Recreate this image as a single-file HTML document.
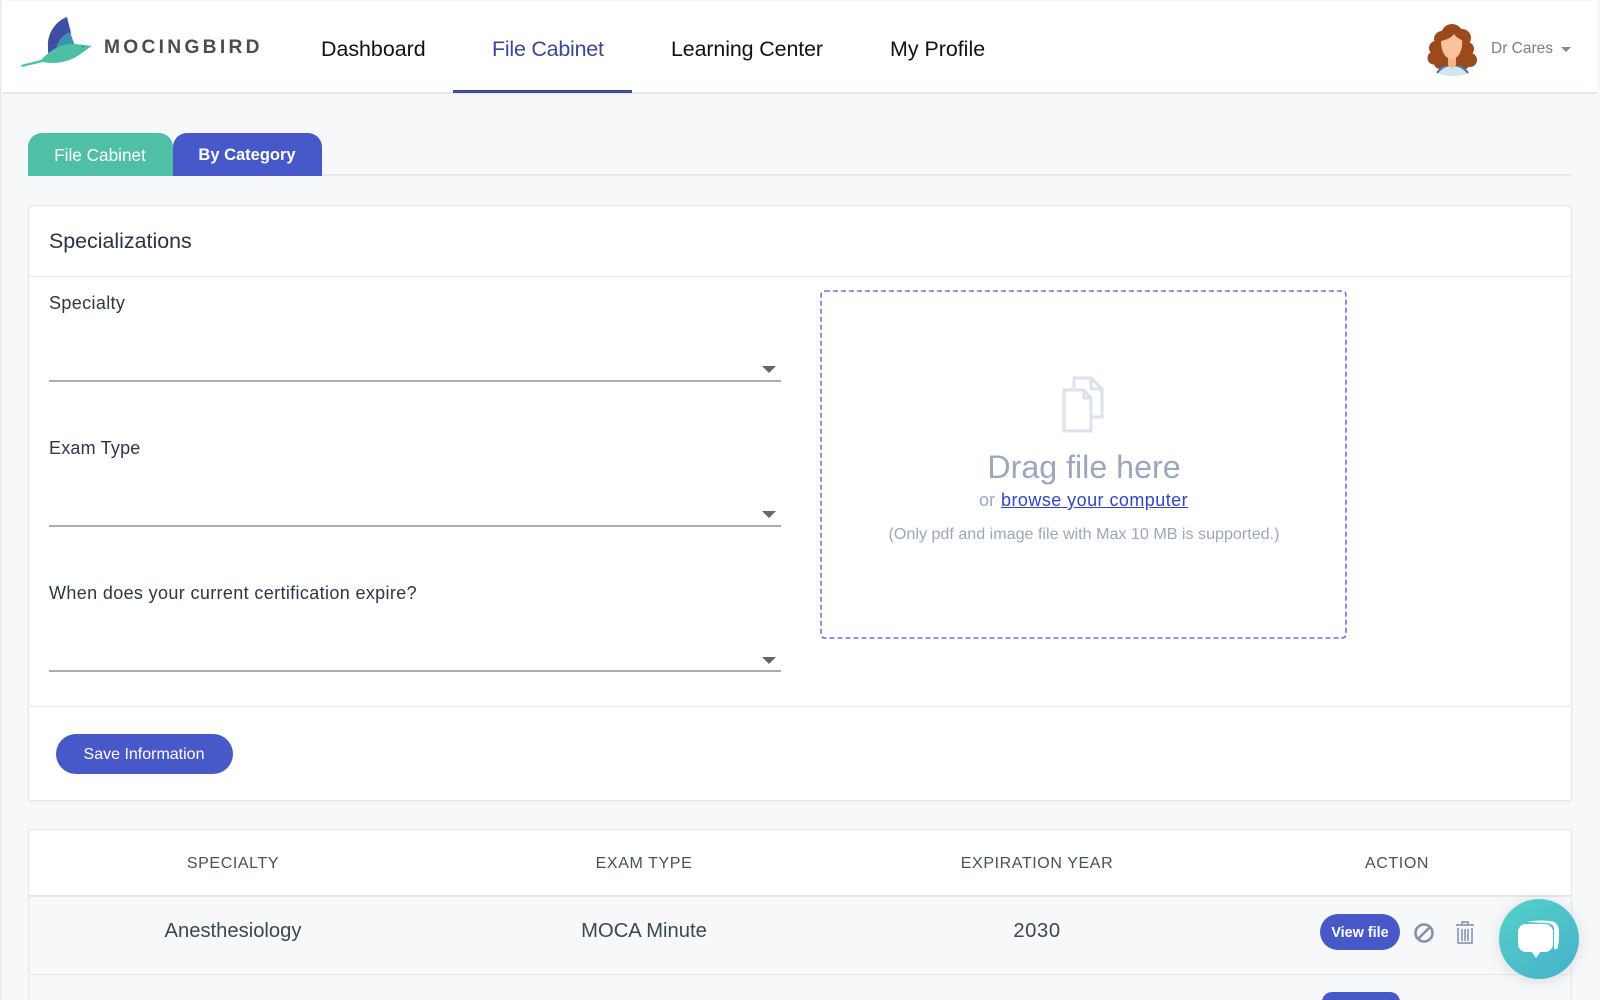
<!DOCTYPE html>
<html><head><meta charset="utf-8"><title>Mocingbird</title>
<style>
html,body{margin:0;padding:0;width:1600px;height:1000px;overflow:hidden}
body{background:#f7f8fa;font-family:"Liberation Sans",sans-serif}
#p{position:relative;width:1600px;height:1000px;overflow:hidden;background:#f7f8fa}
.a,.t{position:absolute}
.t{white-space:nowrap;line-height:1}
.c{transform:translateX(-50%)}
svg{position:absolute;overflow:visible}
.arrow{position:absolute;width:0;height:0;border-left:7px solid transparent;border-right:7px solid transparent;border-top:7px solid #666}
.ln{position:absolute;left:49px;width:732px;height:2px;background:#adadad}
.nav{font-size:21.4px;color:#111;top:39px}
.lab{font-size:18px;color:#2d3748;left:49px;letter-spacing:.36px}
.th{font-size:16px;color:#47505e;top:856px;letter-spacing:.6px}
.td{font-size:20.2px;color:#3d4652;top:921px}
</style></head><body><div id="p">
<header class="a" style="left:2px;top:1px;width:1595px;height:91px;background:#fff;border-bottom:2px solid #e6e8ec"></header>
<div class="a" style="left:0;top:0;width:1px;height:1000px;background:#e6e8ec"></div>
<svg style="left:0;top:0" width="100" height="80" viewBox="0 0 100 80">
<path d="M67 17C56 21 47 33 48 47C48 51 48 54 49 57L56 53L71 33Z" fill="#3f4da3"/>
<path d="M55 53C57 41 62 35 70 32L75 46C67 46 61 49 55 53Z" fill="#3f8fb0"/>
<path d="M21 65L41 60C47 54 56 45 70 44C78 44 85 45 92 46C85 50 78 58 66 61C56 64 48 63 43 62L22 67Z" fill="#4dbfa5"/>
<circle cx="83" cy="46.5" r=".8" fill="#3f4da3"/>
</svg>
<div class="t" style="left:104px;top:38px;font-size:19.2px;font-weight:bold;color:#4a4c50;letter-spacing:3.3px">MOCINGBIRD</div>
<div class="t nav" style="left:321px">Dashboard</div>
<div class="t nav" style="left:492px;color:#3b4699;letter-spacing:-.2px">File Cabinet</div>
<div class="t nav" style="left:671px;letter-spacing:-.1px">Learning Center</div>
<div class="t nav" style="left:890px">My Profile</div>
<div class="a" style="left:453px;top:90px;width:179px;height:3px;background:#3f4a9f"></div>
<svg style="left:1425px;top:22px" width="56" height="56" viewBox="0 0 56 56">
<g fill="#9b4a1c"><circle cx="27" cy="13" r="11"/><circle cx="17" cy="17" r="8"/><circle cx="37" cy="16" r="9"/><circle cx="11" cy="26" r="7"/><circle cx="42" cy="27" r="7"/><circle cx="9" cy="36" r="6.5"/><circle cx="45" cy="38" r="7"/><circle cx="15" cy="41" r="6"/><circle cx="38" cy="42" r="6"/><rect x="13" y="15" width="28" height="30"/></g>
<path d="M13 51C17 46 22 44 27 44C33 44 38 46 42 51C36 55 19 55 13 51Z" fill="#cfe8ee"/>
<path d="M12 51C15 47 18 45 21 44M43 51C40 47 37 45 34 44" stroke="#3f78b5" stroke-width="2.2" fill="none"/>
<path d="M23 33H31V43L27 47L23 43Z" fill="#f4b48c"/>
<path d="M16 19C21 18 26 16 29 12C31 15 34 17 37 18C38 29 33 37 27 37C20 37 16 29 16 19Z" fill="#fcc19a"/>
</svg>
<div class="t" style="left:1491px;top:41px;font-size:15.5px;color:#7a7f87">Dr Cares</div>
<div class="arrow" style="left:1561px;top:47px;border-left-width:5px;border-right-width:5px;border-top-width:5px;border-top-color:#85888d"></div>

<div class="a" style="left:28px;top:174px;width:1544px;height:2px;background:#e6e8ec"></div>
<div class="a" style="left:28px;top:133px;width:145px;height:43px;background:#4fbfa6;border-radius:14px 14px 0 0"></div>
<div class="a" style="left:173px;top:133px;width:149px;height:43px;background:#4759c8;border-radius:14px 14px 0 0"></div>
<div class="t c" style="left:100px;top:147px;font-size:17.2px;color:#fff">File Cabinet</div>
<div class="t c" style="left:247px;top:147px;font-size:16.5px;font-weight:bold;color:#fff">By Category</div>

<section class="a" style="left:28px;top:205px;width:1542px;height:594px;background:#fff;border:1px solid #e6e8ec;border-radius:4px;box-shadow:0 1px 2px rgba(0,0,0,.05)"></section>
<div class="a" style="left:29px;top:276px;width:1542px;height:1px;background:#e6e8ec"></div>
<div class="a" style="left:29px;top:706px;width:1542px;height:1px;background:#e6e8ec"></div>
<div class="t" style="left:49px;top:231px;font-size:21.4px;color:#2a3342">Specializations</div>
<div class="t lab" style="top:294px">Specialty</div>
<div class="ln" style="top:380px"></div>
<div class="arrow" style="left:762px;top:366px"></div>
<div class="t lab" style="top:439px;letter-spacing:.2px">Exam Type</div>
<div class="ln" style="top:525px"></div>
<div class="arrow" style="left:762px;top:511px"></div>
<div class="t lab" style="top:584px">When does your current certification expire?</div>
<div class="ln" style="top:670px"></div>
<div class="arrow" style="left:762px;top:657px"></div>

<svg style="left:820px;top:290px" width="528" height="351"><rect x="1" y="1" width="525" height="347" rx="4" fill="none" stroke="#4a5bc7" stroke-width="1.3" stroke-dasharray="5 3"/></svg>
<svg style="left:1062px;top:376px" width="42" height="58" viewBox="0 0 42 58" fill="none" stroke="#dbe2ec" stroke-width="3">
<path d="M12 12V2H29L40 13V41H29"/><path d="M29 2V13H40"/>
<path d="M2 14H22L29 22V55H2Z" fill="#fff"/><path d="M22 14V22H29"/>
</svg>
<div class="t c" style="left:1084px;top:451px;font-size:32.2px;color:#9aa7bd">Drag file here</div>
<div class="t" style="left:979px;top:491px;font-size:18px;color:#9aa7bd">or</div>
<div class="t" style="left:1001px;top:491px;font-size:18px;color:#3245c2;text-decoration:underline;letter-spacing:.45px">browse your computer</div>
<div class="t c" style="left:1084px;top:526px;font-size:16.1px;color:#9aa7bd">(Only pdf and image file with Max 10 MB is supported.)</div>

<div class="a" style="left:56px;top:734px;width:177px;height:40px;border-radius:20px;background:#4759c8"></div>
<div class="t c" style="left:144px;top:747px;font-size:16px;color:#fff">Save Information</div>

<section class="a" style="left:28px;top:829px;width:1542px;height:200px;background:#fff;border:1px solid #e6e8ec"></section>
<div class="a" style="left:29px;top:895px;width:1542px;height:80px;background:#f7f8fa;border-top:2px solid #e4e6ea;border-bottom:1px solid #e4e6ea;box-sizing:border-box"></div>
<div class="a" style="left:29px;top:975px;width:1542px;height:30px;background:#f7f8fa"></div>
<div class="t c th" style="left:233px">SPECIALTY</div>
<div class="t c th" style="left:644px">EXAM TYPE</div>
<div class="t c th" style="left:1037px">EXPIRATION YEAR</div>
<div class="t c th" style="left:1397px">ACTION</div>
<div class="t c td" style="left:233px">Anesthesiology</div>
<div class="t c td" style="left:644px">MOCA Minute</div>
<div class="t c td" style="left:1037px;letter-spacing:.6px">2030</div>
<div class="a" style="left:1320px;top:914px;width:80px;height:36px;border-radius:18px;background:#4759c8"></div>
<div class="t c" style="left:1360px;top:926px;font-size:14.4px;color:#fff;font-weight:bold">View file</div>
<svg style="left:1412px;top:921px" width="24" height="24" fill="none" stroke="#8492a6" stroke-width="2.6"><circle cx="12" cy="12" r="8.5"/><path d="M6 18L18 6"/></svg>
<svg style="left:1455px;top:920px" width="20" height="24" viewBox="0 0 20 24" fill="none" stroke="#8e9bb0" stroke-width="1.7"><path d="M1 5H19M7 5V2H13V5M3 8V23H17V8M7 9V21M10 9V21M13 9V21"/></svg>
<div class="a" style="left:1322px;top:992px;width:78px;height:20px;border-radius:18px;background:#4759c8"></div>

<div class="a" style="left:1499px;top:899px;width:80px;height:80px;border-radius:50%;background:linear-gradient(145deg,#54d2c8,#45b0cb);box-shadow:0 2px 16px rgba(0,0,0,.12)"></div>
<svg style="left:1499px;top:899px" width="80" height="80" viewBox="0 0 80 80">
<path d="M28 23C35 21 50 21 55 23C59 25 60 28 60 34C60 40 60 46 58 50L55 50L55 30C55 26 52 24 47 24Z" fill="#fff"/>
<rect x="19" y="25" width="35" height="28" rx="8" fill="#fff"/>
<path d="M32 52H42L37 59Z" fill="#fff"/>
</svg>
</div></body></html>
